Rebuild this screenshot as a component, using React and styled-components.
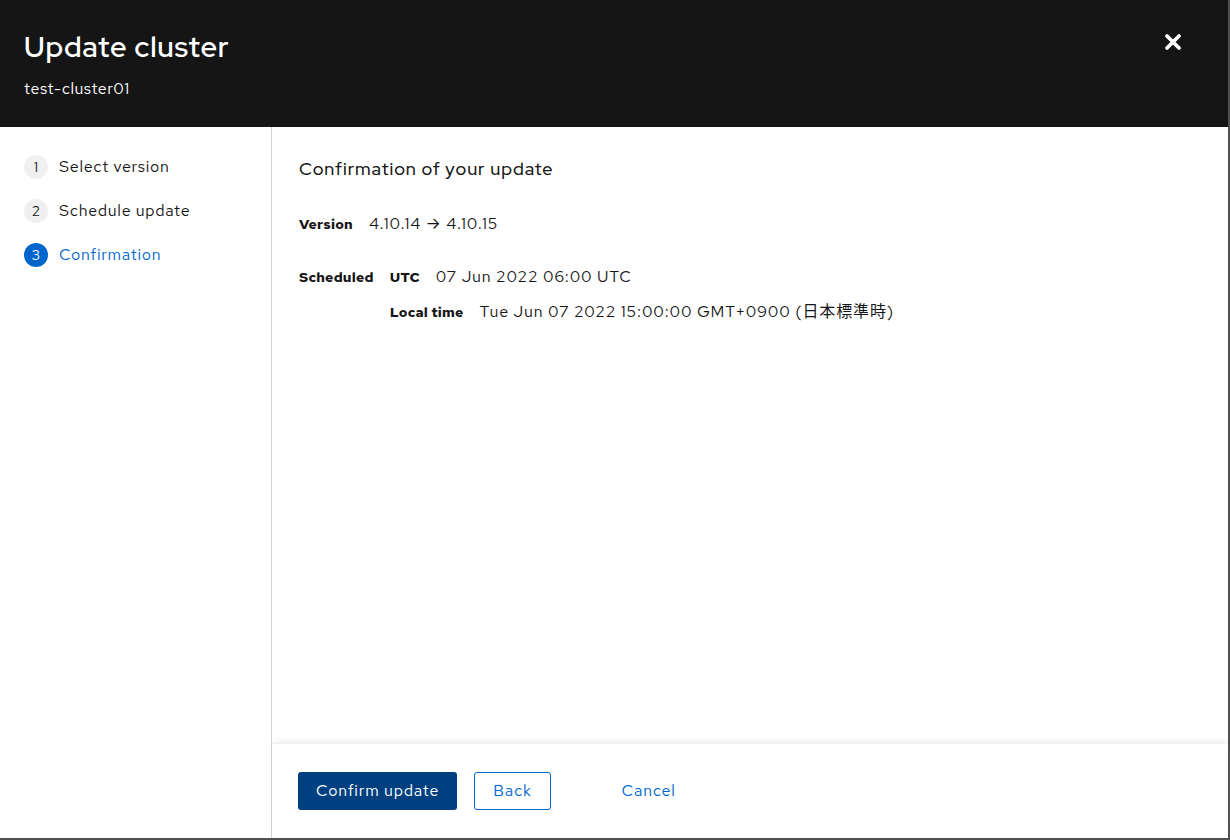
import React from 'react'
import styled, { createGlobalStyle } from 'styled-components'

const GlobalStyle = createGlobalStyle`
    html, body {
        margin: 0;
        padding: 0;
        background: #4f5052;
    }
    body {
        font-family: "Red Hat Text", Inter, "Noto Sans", "Noto Sans CJK JP", sans-serif;
        color: #151515;
    }
`

const steps = [
    { n: 1, label: 'Select version' },
    { n: 2, label: 'Schedule update' },
    { n: 3, label: 'Confirmation', current: true },
]

function CloseIcon() {
    return (
        <svg width="18" height="18" viewBox="0 0 18 18">
            <path d="M3 3 L15 15 M15 3 L3 15" stroke="#fff" strokeWidth="3.8" strokeLinecap="round" />
        </svg>
    )
}

function App() {
    return (
        <>
            <GlobalStyle />
            <Modal>
                <Header>
                    <div>
                        <Title>Update cluster</Title>
                        <Subtitle>test-cluster01</Subtitle>
                    </div>
                    <CloseButton aria-label="Close"><CloseIcon /></CloseButton>
                </Header>
                <Body>
                    <Nav>
                        {steps.map(s => (
                            <Step key={s.n} current={s.current}>
                                <StepNum current={s.current}>{s.n}</StepNum>
                                {s.label}
                            </Step>
                        ))}
                    </Nav>
                    <Main>
                        <Content>
                            <SectionTitle>Confirmation of your update</SectionTitle>
                            <Row>
                                <Label>Version</Label>
                                <Value>4.10.14 → 4.10.15</Value>
                            </Row>
                            <Row top>
                                <Label>Scheduled</Label>
                                <Nested>
                                    <Row>
                                        <Label>UTC</Label>
                                        <Value>07 Jun 2022 06:00 UTC</Value>
                                    </Row>
                                    <Row>
                                        <Label>Local time</Label>
                                        <Value>Tue Jun 07 2022 15:00:00 GMT+0900 (日本標準時)</Value>
                                    </Row>
                                </Nested>
                            </Row>
                        </Content>
                        <Footer>
                            <PrimaryButton>Confirm update</PrimaryButton>
                            <SecondaryButton>Back</SecondaryButton>
                            <LinkButton>Cancel</LinkButton>
                        </Footer>
                    </Main>
                </Body>
            </Modal>
        </>
    )
}

const Modal = styled.div`
    width: 1228px;
    height: 838px;
    background: #fff;
    display: flex;
    flex-direction: column;
`

const Header = styled.header`
    height: 127px;
    box-sizing: border-box;
    background: #151515;
    color: #fff;
    display: flex;
    justify-content: space-between;
    padding: 29px 46px 0 24px;
`

const Title = styled.h1`
    margin: 0;
    font-family: "Red Hat Display", Inter, "Noto Sans", sans-serif;
    font-size: 29px;
    font-weight: 600;
    line-height: 36px;
    letter-spacing: 0.8px;
`

const Subtitle = styled.div`
    margin-top: 14px;
    font-size: 16px;
    line-height: 20px;
    letter-spacing: 0.5px;
`

const CloseButton = styled.button`
    background: none;
    border: none;
    padding: 0;
    margin-top: 4px;
    width: 18px;
    height: 18px;
    cursor: pointer;
`

const Body = styled.div`
    flex: 1;
    display: flex;
    min-height: 0;
`

const Nav = styled.nav`
    width: 272px;
    flex-shrink: 0;
    border-right: 1px solid #d2d2d2;
    padding: 28px 0 0 24px;
    box-sizing: border-box;
    display: flex;
    flex-direction: column;
    gap: 20px;
`

const Step = styled.div`
    display: flex;
    align-items: center;
    gap: 11px;
    font-size: 16px;
    line-height: 24px;
    letter-spacing: 0.7px;
    color: ${p => (p.current ? '#0066cc' : '#151515')};
`

const StepNum = styled.span`
    width: 24px;
    height: 24px;
    border-radius: 50%;
    display: flex;
    align-items: center;
    justify-content: center;
    font-size: 14px;
    letter-spacing: 0;
    background: ${p => (p.current ? '#0066cc' : '#f0f0f0')};
    color: ${p => (p.current ? '#fff' : '#151515')};
`

const Main = styled.main`
    flex: 1;
    display: flex;
    flex-direction: column;
`

const Content = styled.div`
    flex: 1;
    padding: 30px 0 0 27px;
    display: flex;
    flex-direction: column;
`

const SectionTitle = styled.h2`
    margin: 0 0 31px;
    font-family: "Red Hat Display", Inter, "Noto Sans", sans-serif;
    font-size: 18px;
    font-weight: 500;
    line-height: 24px;
    letter-spacing: 0.95px;
`

const Row = styled.div`
    display: flex;
    align-items: ${p => (p.top ? 'flex-start' : 'baseline')};
    gap: 16px;
    margin-bottom: ${p => (p.top ? '0' : '29px')};
`

const Nested = styled.div`
    display: flex;
    flex-direction: column;
    & > div {
        margin-bottom: 11px;
    }
`

const Label = styled.span`
    font-size: 14px;
    font-weight: 700;
    line-height: 24px;
    letter-spacing: 0.2px;
`

const Value = styled.span`
    font-size: 16px;
    line-height: 24px;
    letter-spacing: 0.85px;
`

const Footer = styled.footer`
    height: 95px;
    box-sizing: border-box;
    box-shadow: 0 -4px 6px -2px rgba(3, 3, 3, 0.08);
    border-top: 1px solid #f0f0f0;
    display: flex;
    align-items: center;
    gap: 17px;
    padding: 0 0 0 26px;
`

const ButtonBase = styled.button`
    font-family: inherit;
    font-size: 16px;
    line-height: 24px;
    letter-spacing: 0.8px;
    height: 38px;
    border-radius: 3px;
    padding: 6px 18px;
    cursor: pointer;
`

const PrimaryButton = styled(ButtonBase)`
    background: #004080;
    color: #fff;
    border: none;
`

const SecondaryButton = styled(ButtonBase)`
    background: #fff;
    color: #0066cc;
    border: 1px solid #0066cc;
`

const LinkButton = styled(ButtonBase)`
    background: none;
    border: none;
    color: #0066cc;
    margin-left: 54px;
    padding: 6px 0;
`

export default App
